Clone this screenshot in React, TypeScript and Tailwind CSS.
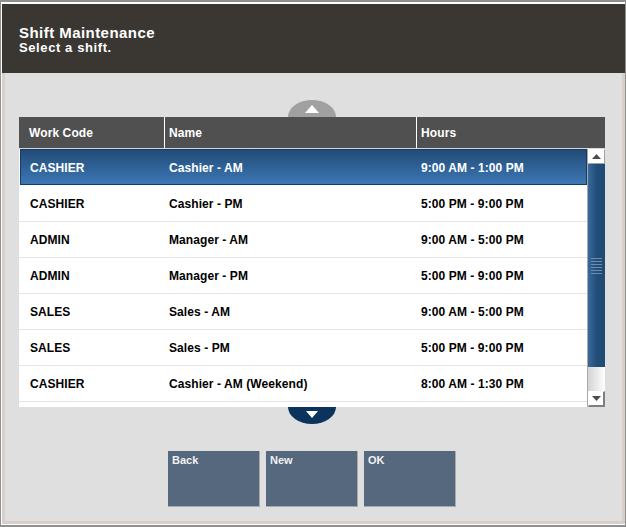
import React from "react";

const rows = [
  { code: "CASHIER", name: "Cashier - AM", hours: "9:00 AM - 1:00 PM" },
  { code: "CASHIER", name: "Cashier - PM", hours: "5:00 PM - 9:00 PM" },
  { code: "ADMIN", name: "Manager - AM", hours: "9:00 AM - 5:00 PM" },
  { code: "ADMIN", name: "Manager - PM", hours: "5:00 PM - 9:00 PM" },
  { code: "SALES", name: "Sales - AM", hours: "9:00 AM - 5:00 PM" },
  { code: "SALES", name: "Sales - PM", hours: "5:00 PM - 9:00 PM" },
  { code: "CASHIER", name: "Cashier - AM (Weekend)", hours: "8:00 AM - 1:30 PM" },
];

function ScrollButton({ down }: { down?: boolean }) {
  return (
    <div
      className={
        down
          ? "h-4 w-[17px] shrink-0 bg-white border-t border-l border-white border-r-2 border-b-2 border-r-[#7f7f7f] border-b-[#7f7f7f] flex items-center justify-center"
          : "h-[15px] w-[17px] shrink-0 bg-white border-t border-l border-white border-r border-b border-r-[#a0a0a0] border-b-[#a0a0a0] flex items-center justify-center"
      }
    >
      <svg width="9" height="5" viewBox="0 0 9 5">
        <path d={down ? "M0 0H9L4.5 5Z" : "M4.5 0L9 5H0Z"} fill="#4d4d4d" />
      </svg>
    </div>
  );
}

export default function App() {
  return (
    <div className="w-[626px] h-[527px] overflow-hidden bg-white font-['Liberation_Sans',Arial,sans-serif] border-t-2 border-b-2 border-x border-[#8f8f8f]">
      <div className="h-full flex flex-col pt-0.5 pl-px">
        <div className="h-[69px] shrink-0 bg-[#3a3733] text-white font-bold pl-[17px] pt-5">
          <div className="text-[15px] leading-[18px] tracking-[0.45px]">Shift Maintenance</div>
          <div className="text-[13px] leading-[14px] -mt-px tracking-[0.6px]">Select a shift.</div>
        </div>
        <div className="flex-1 flex flex-col bg-[#dfdfdf] border-l-[3px] border-b-[3px] border-r-[3px] border-[#d8cfc9] mb-px">
          <div className="flex justify-center pt-[27px] pr-[3px]">
            <div className="w-12 h-[17px] bg-[#a1a1a1] rounded-t-[50%_100%] flex justify-center pt-[5px]">
              <svg width="14" height="8" viewBox="0 0 14 8">
                <path d="M7 0L14 8H0Z" fill="#fff" />
              </svg>
            </div>
          </div>
          <div className="ml-[14px] w-[586px] flex flex-col">
            <div className="h-8 flex bg-[#505050] text-white text-xs font-bold tracking-[0.1px] border-b border-[#d8d8d8]">
              <div className="w-[145px] pl-2.5 flex items-center">Work Code</div>
              <div className="w-[252px] pl-1 flex items-center border-l border-white">Name</div>
              <div className="flex-1 pl-1 flex items-center border-l border-white">Hours</div>
            </div>
            <div className="h-[258px] flex overflow-hidden">
              <div className="flex-1 bg-white">
                {rows.map((r, i) => (
                  <div
                    key={i}
                    className={
                      i === 0
                        ? "h-9 ml-px mb-px pt-px flex items-center text-xs font-bold tracking-[0.08px] text-white bg-gradient-to-b from-[#234c78] to-[#3c77b5] border border-[#0f3f68]"
                        : "h-9 flex items-center text-xs font-bold tracking-[0.08px] text-black border-b border-[#e4e4e4]"
                    }
                  >
                    <div className={i === 0 ? "w-[148px] pl-[9px]" : "w-[150px] pl-[11px]"}>{r.code}</div>
                    <div className="w-[252px]">{r.name}</div>
                    <div>{r.hours}</div>
                  </div>
                ))}
              </div>
              <div className="w-[18px] flex flex-col border-l border-[#a8a8a8] bg-white">
                <ScrollButton />
                <div className="h-[203px] bg-gradient-to-r from-[#3a6a9c] via-[#214d78] to-[#1f4a74] flex flex-col justify-center items-center gap-0.5">
                  {[0, 1, 2, 3, 4, 5].map((n) => (
                    <div key={n} className="w-[11px] h-px bg-[#6f8dab]" />
                  ))}
                </div>
                <div className="flex-1 bg-gradient-to-r from-[#d4d4d4] to-white" />
                <ScrollButton down />
              </div>
            </div>
          </div>
          <div className="flex justify-center pr-[3px]">
            <div className="w-12 h-[17px] bg-[#0b345c] rounded-b-[50%_100%] flex justify-center pt-[4px]">
              <svg width="12" height="7" viewBox="0 0 12 7">
                <path d="M0 0H12L6 7Z" fill="#fff" />
              </svg>
            </div>
          </div>
          <div className="flex justify-center gap-1.5 mt-[27px] pr-[3px]">
            {["Back", "New", "OK"].map((b) => (
              <div
                key={b}
                className="w-[92px] h-14 bg-[#56687d] text-[#f2f2f2] text-[11px] font-bold leading-none pl-1 pt-1 border-r border-b border-[#a9a9a9]"
              >
                {b}
              </div>
            ))}
          </div>
        </div>
      </div>
    </div>
  );
}
